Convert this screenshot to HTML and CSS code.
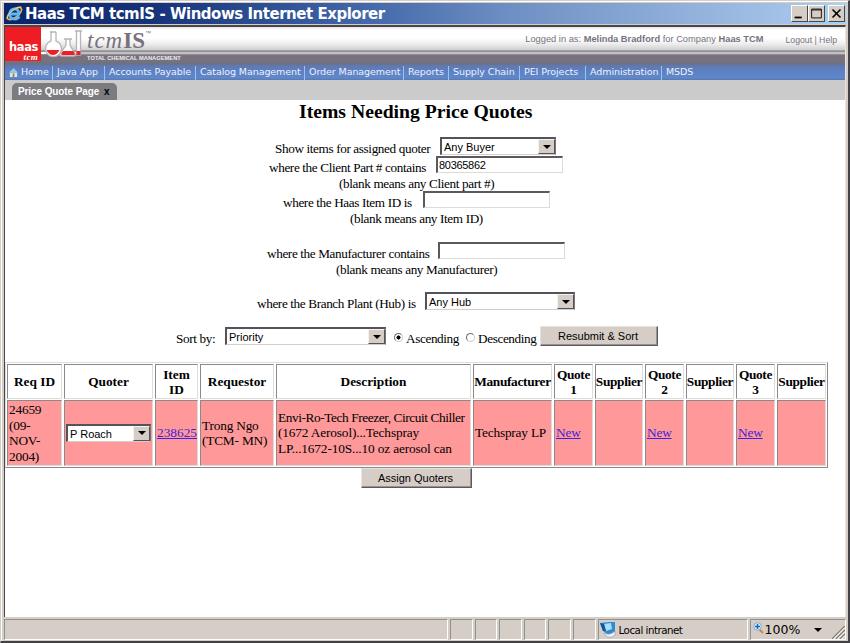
FILE: index.html
```html
<!DOCTYPE html>
<html lang="en">
<head>
<meta charset="utf-8">
<title>Haas TCM tcmIS</title>
<link rel="stylesheet" href="styles.css">
</head>
<body>
<div class="window">
  <header class="titlebar">
    <svg class="ie" viewBox="0 0 20 20"><ellipse cx="10" cy="10" rx="9" ry="4" transform="rotate(-38 10 10)" fill="none" stroke="#e8ae48" stroke-width="1.8"/><path d="M5 10.5H14.5C15 3 5 3.500 4.800 10.500C5 17 13 17 15 13" fill="none" stroke="#5fb8f2" stroke-width="3"/><path d="M2 16C2 12 7 5 17 3" fill="none" stroke="#f3d58b" stroke-width="1"/></svg>
    <h1>Haas TCM tcmIS - Windows Internet Explorer</h1>
    <div class="controls">
      <button aria-label="Minimize"><svg viewBox="0 0 17 17"><path d="M3 12h8v2H3z"/></svg></button>
      <button aria-label="Maximize"><svg viewBox="0 0 17 17"><path d="M3 3.500h11v10h-11zM3 4.500h11" fill="none" stroke="#000"/></svg></button>
      <button aria-label="Close"><svg viewBox="0 0 17 17"><path d="M4 4l9 9M13 4l-9 9" stroke="#000" stroke-width="1.9"/></svg></button>
    </div>
  </header>
  <div class="view">
    <div class="banner">
      <div class="haas"><b>haas</b><i>tcm</i></div>
      <svg class="flasks" viewBox="0 0 42 38"><path d="M0 27H39" stroke="#fff" stroke-width="2"/><path d="M9 6h6M10 6v9A8 8 0 1 0 15 15V6M23 13h8M25 13v6L19 28Q18 30 21 30H33Q35 30 34 28L29 19V13" fill="#fff" stroke="#b5b3b7" stroke-width="1.300"/><path d="M34 5h7M35.500 5v24h4V5" fill="#fff" stroke="#b5b3b7" stroke-width="1.300"/><path d="M5.500 24H18.500Q16 29 12 29T5.500 24M22 25H32L34 28 33 29H21L20 28zM35.500 25h4v4h-4z" fill="#ed1f26"/></svg>
      <div class="brand"><div class="logo"><i>tcm</i><b>IS</b><sup>™</sup></div><div class="tagline">TOTAL CHEMICAL MANAGEMENT</div></div>
      <div class="login"><span class="who">Logged in as: <b>Melinda Bradford</b> for Company <b>Haas TCM</b></span><span class="out">Logout | Help</span></div>
    </div>
    <nav>
      <svg class="home" viewBox="0 0 10 12"><path d="M1 6h8v5H1z" fill="#dce5e8"/><path d="M0 6L5 1l5 5H0z" fill="#8fc9e8"/><path d="M4 7h2v4H4z" fill="#b17e3c"/></svg>
      <a class="n1">Home</a><a class="n2">Java App</a><a class="n3">Accounts Payable</a><a class="n4">Catalog Management</a><a class="n5">Order Management</a><a class="n6">Reports</a><a class="n7">Supply Chain</a><a class="n8">PEI Projects</a><a class="n9">Administration</a><a class="n10">MSDS</a>
    </nav>
    <div class="tabs"><div class="tab">Price Quote Page <b>x</b></div></div>
    <main>
      <h2>Items Needing Price Quotes</h2>
      <form>
        <div class="row r1"><label>Show items for assigned quoter</label><div class="select buyer"><span>Any Buyer</span><i></i></div></div>
        <div class="row r2"><label>where the Client Part # contains</label><div class="field">80365862</div></div>
        <p class="hint h1">(blank means any Client part #)</p>
        <div class="row r3"><label>where the Haas Item ID is</label><div class="field"></div></div>
        <p class="hint h2">(blank means any Item ID)</p>
        <div class="row r4"><label>where the Manufacturer contains</label><div class="field"></div></div>
        <p class="hint h3">(blank means any Manufacturer)</p>
        <div class="row r5"><label>where the Branch Plant (Hub) is</label><div class="select hub"><span>Any Hub</span><i></i></div></div>
        <div class="row sort"><label>Sort by:</label><div class="select priority"><span>Priority</span><i></i></div><span class="radio on"></span><label class="asc">Ascending</label><span class="radio"></span><label class="desc">Descending</label><button class="btn resubmit" type="button">Resubmit &amp; Sort</button></div>
      </form>
      <table>
        <thead><tr><th>Req ID</th><th>Quoter</th><th>Item<br>ID</th><th>Requestor</th><th>Description</th><th class="tight">Manufacturer</th><th class="tight">Quote<br>1</th><th class="tight">Supplier</th><th class="tight">Quote<br>2</th><th class="tight">Supplier</th><th class="tight">Quote<br>3</th><th class="tight">Supplier</th></tr></thead>
        <tbody><tr><td>24659<br>(09-<br>NOV-<br>2004)</td><td class="quoter"><div class="select"><span>P Roach</span><i></i></div></td><td class="id"><u>238625</u></td><td>Trong Ngo<br>(TCM- MN)</td><td class="description"><span>Envi-Ro-Tech Freezer, Circuit Chiller</span><br>(1672 Aerosol)...Techspray<br>LP...1672-10S...10 oz aerosol can</td><td>Techspray LP</td><td><u>New</u></td><td></td><td><u>New</u></td><td></td><td><u>New</u></td><td></td></tr></tbody>
      </table>
      <button class="btn assign" type="button">Assign Quoters</button>
    </main>
  </div>
  <footer>
    <div></div><div></div><div></div><div></div><div></div><div></div><div></div>
    <div class="zone"><svg viewBox="0 0 18 17"><path d="M1 2L10 1 16 1V11L11 15 4 10z" fill="#318bd0"/><path d="M5 3l7-1 1 6-6 2z" fill="#a3e1fa"/><path d="M1 2l4 1 2 7-3 0z" fill="#17539c"/><path d="M5 12q6 3 11-2v4q-5 4-9 1z" fill="#eef1f5" stroke="#8795ac" stroke-width=".6"/></svg><span>Local intranet</span></div>
    <div class="zoom"><svg class="lens" viewBox="0 0 11 12"><path d="M6 7l4 4" stroke="#c48650" stroke-width="2"/><circle cx="4.500" cy="4.500" r="3.800" fill="#d8efff" stroke="#83a9cf"/><path d="M4.500 2v5M2 4.500h5" stroke="#1768b5" stroke-width="1.500"/></svg><span>100%</span><i class="arrow"></i><svg class="grip" viewBox="0 0 13 13"><path d="M0 13L13 0M4 13l9-9M8 13l5-5" stroke="#807b75" stroke-width="1.400"/><path d="M1.500 13L13 1.500M5.500 13L13 5.500M9.500 13L13 9.500" stroke="#fff"/></svg></div>
  </footer>
</div>
</body>
</html>
```

FILE: styles.css
```css
* { box-sizing: border-box; }
body { margin: 0; overflow: hidden; font-family: "Liberation Serif", serif; color: #000; }
h1, h2, p { margin: 0; }
svg { display: block; flex: none; }
.window { width: 850px; height: 643px; display: flex; flex-direction: column; background: #d6cec6; border: 1px solid #d6cec6; border-right: 2px solid #444147; border-bottom: 2px solid #444147; padding: 2px 2px 0 3px; box-shadow: inset 1px 1px #fff; }
.titlebar { height: 21px; flex: none; display: flex; align-items: center; background: linear-gradient(90deg, #0b246a 0%, #16347b 18%, #4066a8 42%, #6e8fc3 60%, #a6c4e9 94%, #a0d5f5 100%); }
.ie { width: 19px; height: 19px; margin-left: 1px; }
h1 { font: bold 15px/21px "DejaVu Sans", sans-serif; letter-spacing: -.48px; color: #fff; margin-left: 1px; padding-top: 2px; white-space: nowrap; }
.controls { margin-left: auto; display: flex; padding-right: 1px; }
.controls button { width: 17px; height: 17px; padding: 0; background: #d6cec6; border: 1px solid; border-color: #fff #49464a #49464a #fff; }
.controls button svg { width: 15px; height: 15px; }
.controls button:last-child { margin-left: 3px; }
.view { height: 592px; margin-top: 1px; flex: none; border-left: 1px solid #46464b; border-top: 2px solid #46464b; border-right: 1px solid #e8e5df; background: #fff; display: flex; flex-direction: column; }
.banner { height: 38px; flex: none; display: flex; background: linear-gradient(#e5e5e7 0, #fff 3px, #fff 11px, #ededed 17px, #cfcfd0 23px, #77747c 24px, #dcdadd 26px, #77727d 28px, #77727d 34px, #6b7187 37px, #6374a2 38px); }
.haas { width: 36px; height: 34px; background: #ee1d23; color: #fff; display: flex; flex-direction: column; align-items: flex-end; padding: 14px 3px 0 0; }
.haas b { font: bold 11.500px/13px "DejaVu Sans", sans-serif; letter-spacing: -.4px; }
.haas i { font: italic bold 9px/6px "Liberation Serif", serif; letter-spacing: .3px; }
.flasks { width: 42px; height: 38px; margin-top: -1px; }
.brand { width: 110px; padding-left: 4px; color: #77727e; }
.logo { height: 26px; display: flex; font: 23px/28px "Liberation Serif", serif; }
.logo i { letter-spacing: 1px; }
.logo sup { font: 6px/12px "Liberation Sans", sans-serif; }
.tagline { font: bold 5.700px/10px "Liberation Sans", sans-serif; color: #eee; white-space: nowrap; letter-spacing: .04px; }
.login { margin-left: auto; display: flex; font: 9.300px/13px "Liberation Sans", sans-serif; color: #77727e; white-space: nowrap; padding: 6px 8px 0 0; }
.out { margin-left: 22px; font-size: 8.700px; line-height: 14px; }
nav { height: 15px; flex: none; display: flex; align-items: center; background: linear-gradient(#6277ab, #5b82c8 45%, #6287c7 85%, #5579b7); color: #edf1f8; font: 9.500px/12px "DejaVu Sans", sans-serif; letter-spacing: -.08px; white-space: nowrap; }
.home { width: 9px; height: 11px; margin-left: 4px; }
nav a { padding-left: 4px; height: 14px; border-right: 1px solid #9bc4ec; }
nav a.n1 { padding-left: 3px; }
nav a:last-child { border: 0; }
.n1 { width: 35px; } .n2 { width: 52px; } .n3 { width: 91px; } .n4 { width: 109px; } .n5 { width: 99px; } .n6 { width: 45px; } .n7 { width: 71px; } .n8 { width: 66px; } .n9 { width: 76px; } .n10 { width: 50px; }
.tabs { height: 20px; flex: none; background: #cbcbcb; padding: 3px 0 0 7px; }
.tab { width: 105px; height: 17px; border-radius: 5px 5px 0 0; background: #7c7b80; color: #fff; font: bold 10px/17px "Liberation Sans", sans-serif; letter-spacing: -.1px; padding-left: 6px; white-space: nowrap; }
.tab b { color: #000; margin-left: 2px; }
main { flex: 1; display: flex; flex-direction: column; align-items: flex-start; font-size: 13.333px; }
h2 { font-size: 19.700px; line-height: 22px; height: 24px; margin-left: 294px; white-space: nowrap; }
form { height: 238px; display: flex; flex-direction: column; align-items: flex-start; padding-top: 13px; white-space: nowrap; font-size: 13.200px; letter-spacing: -.37px; }
.row { display: flex; height: 18px; align-items: flex-start; line-height: 23px; }
.select { height: 18px; border: 1px solid #55535a; border-width: 2px 1px 1px 2px; border-right-color: #77747a; border-bottom-color: #d6cec6; background: #fff; display: flex; font: 11px/14px "Liberation Sans", sans-serif; letter-spacing: 0; }
.select span { flex: 1; padding-left: 2px; line-height: 16px; }
.select i { width: 17px; background: #d6cec6; border: 1px solid; border-color: #f5f3f0 #55535a #55535a #f5f3f0; display: flex; justify-content: center; align-items: center; }
.select i::after, .arrow::after { content: ""; border: 4px solid transparent; border-top-color: #000; border-bottom: 0; }
.field { width: 127px; height: 17px; border: 2px solid #5b5960; border-right: 1px solid #dedad6; border-bottom: 1px solid #dedad6; font: 11px/15px "Liberation Sans", sans-serif; letter-spacing: -.3px; padding-left: 1px; }
.hint { line-height: 18px; height: 18px; }
.r1 { margin-left: 270px; height: 19px; } .r1 label { width: 165px; } .buyer { width: 116px; }
.r2 { margin-left: 264px; height: 19px; } .r2 label { width: 167px; }
.h1 { margin-left: 334px; height: 16px; }
.r3 { margin-left: 278px; height: 19px; } .r3 label { width: 140px; }
.h2 { margin-left: 345px; height: 32px; }
.r4 { margin-left: 262px; height: 19px; } .r4 label { width: 171px; }
.h3 { margin-left: 331px; height: 31px; }
.r5 { margin-left: 252px; height: 34px; } .r5 label { width: 168px; } .hub { width: 150px; }
.sort { margin-left: 171px; height: 22px; } .sort label:first-child { width: 49px; }
.sort .select { margin-top: 1px; } .sort label { line-height: 25px; }
.priority { width: 161px; }
.radio { width: 9px; height: 9px; border: 1px solid #6d6a70; border-right-color: #ccc; border-bottom-color: #ccc; border-radius: 50%; margin: 7px 3px 0 8px; }
.on { background: radial-gradient(circle, #000 0, #000 1.800px, #fff 2.300px); }
.sort .asc { width: 52px; } .sort .desc { width: 62px; }
.btn { background: #d6cec6; border: 1px solid; border-color: #e7e2dc #5c5960 #5c5960 #e7e2dc; box-shadow: inset -1px -1px #96918e; font: 11px/16px "Liberation Sans", sans-serif; padding: 0 2px 0 0; }
.resubmit { width: 118px; height: 20px; }
table { width: 823px; height: 106px; display: grid; grid-template-columns: 55px 89px 43px 74px 195px 79px 39px 48px 39px 48px 39px 49px; grid-template-rows: 35px 66px; column-gap: 2px; row-gap: 1px; border: 1px solid; border-color: #dedfd9 #8b898b #8b898b #dedfd9; padding: 1px; line-height: 15.500px; white-space: nowrap; }
thead, tbody, tr { display: contents; }
th, td { padding: 0 1px; border: 1px solid; border-color: #8b898b #deded9 #deded9 #8b898b; display: grid; align-content: center; }
th { justify-content: center; padding: 1px 0 0; text-align: center; }
th.tight { letter-spacing: -.32px; }
td { background: #ff9999; justify-content: start; letter-spacing: -.2px; }
td.quoter { justify-content: stretch; }
.quoter .select { margin-top: -1px; }
td.id { letter-spacing: 0; }
td.description { letter-spacing: -.15px; display: block; padding-top: 8px; }
.description span { letter-spacing: -.42px; }
u { color: #3f22dc; }
.assign { width: 111px; height: 20px; margin-left: 356px; }
footer { height: 21px; flex: none; margin-top: 2px; display: flex; gap: 2px; }
footer > div { border: 1px solid; border-color: #8c9291 #fff #fff #8c9291; width: 22.600px; }
footer > div:first-child { width: 444px; }
footer .zone { width: 150px; display: flex; align-items: center; font: 10.300px/16px "DejaVu Sans", sans-serif; letter-spacing: -.5px; padding-left: 0; }
.zone svg { width: 18px; height: 17px; margin-right: 2px; }
footer .zoom { flex: 1; display: flex; align-items: center; font: 12.500px/18px "DejaVu Sans", sans-serif; padding-left: 2px; }
.lens { width: 11px; height: 12px; margin-right: 1px; margin-top: -3px; }
.arrow { display: flex; margin-left: 14px; }
.grip { width: 13px; height: 13px; margin-left: auto; align-self: flex-end; }
td.description { align-content: center; padding-top: 0; }
```
